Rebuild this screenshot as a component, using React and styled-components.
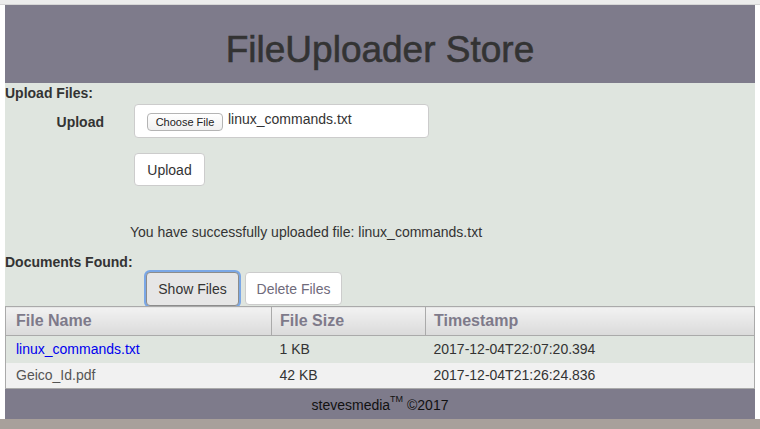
import styled, { createGlobalStyle } from 'styled-components'

const GlobalStyle = createGlobalStyle`
  html, body {
    margin: 0;
    padding: 0;
    background: #ffffff;
  }
  body {
    font-family: "Liberation Sans", Arial, Helvetica, sans-serif;
    font-size: 14px;
    color: #333;
  }
`;

const TopStrip = styled.div`
  height: 4px;
  background: #ececec;
  border-bottom: 1px solid #d6d6d6;
`;

const Page = styled.div`
  margin: 0 5px 0 5px;
  display: flex;
  flex-direction: column;
`;

const Header = styled.header`
  height: 78px;
  background: #7e7b8b;
  display: flex;
  justify-content: center;
  align-items: flex-start;
  box-sizing: border-box;
  padding-top: 25px;
`;

const Title = styled.h1`
  margin: 0;
  font-size: 37px;
  line-height: 40px;
  font-weight: 500;
  color: #333;
  -webkit-text-stroke: 0.6px #333;
`;

const Body = styled.main`
  background: #dfe5df;
  display: flex;
  flex-direction: column;
`;

const SectionTitle = styled.div`
  font-weight: bold;
  font-size: 14px;
  line-height: 20px;
  color: #333;
`;

const FormRow = styled.div`
  display: flex;
  align-items: center;
  gap: 30px;
  height: 34px;
  margin-top: 1px;
`;

const Label = styled.label`
  width: 99px;
  text-align: right;
  font-weight: bold;
  font-size: 14px;
  color: #333;
  padding-top: 1px;
`;

const FileBox = styled.div`
  width: 295px;
  height: 34px;
  box-sizing: border-box;
  background: #fff;
  border: 1px solid #ccc;
  border-radius: 4px;
  display: flex;
  align-items: center;
  padding: 0 12px;
  gap: 5px;
`;

const ChooseButton = styled.span`
  display: inline-flex;
  align-items: center;
  justify-content: center;
  width: 76px;
  height: 18px;
  box-sizing: border-box;
  margin-top: 2px;
  border: 1px solid #b4b4b4;
  border-radius: 4px;
  background: linear-gradient(#ffffff, #f0f0f0);
  font-family: "Liberation Sans", Arial, sans-serif;
  font-size: 11px;
  color: #222;
`;

const FileName = styled.span`
  font-size: 14px;
  color: #333;
  margin-top: -5px;
`;

const Button = styled.button`
  box-sizing: border-box;
  height: ${(p) => p.h || 33}px;
  width: ${(p) => p.w}px;
  font-family: "Liberation Sans", Arial, sans-serif;
  font-size: 14px;
  color: ${(p) => (p.muted ? '#6f6b7b' : '#333')};
  background: ${(p) => (p.active ? '#e6e6e6' : '#fff')};
  border: 1px solid ${(p) => (p.active ? '#8c8c8c' : '#ccc')};
  border-radius: 4px;
  box-shadow: ${(p) => (p.active ? '0 0 0 2px #7aa7e6' : 'none')};
  padding: 0;
  cursor: pointer;
`;

const UploadRow = styled.div`
  padding-left: 129px;
  margin-top: 15px;
`;

const Message = styled.div`
  margin-top: 36px;
  padding-left: 125px;
  font-size: 14px;
  line-height: 20px;
  color: #333;
`;

const DocsTitle = styled(SectionTitle)`
  margin-top: 10px;
`;

const ButtonBar = styled.div`
  display: flex;
  gap: 6px;
  padding-left: 141px;
  height: 34px;
  align-items: flex-start;
`;

const Table = styled.table`
  width: 100%;
  border-collapse: collapse;
  border-left: 1px solid #aaa;
  border-right: 1px solid #aaa;
  font-size: 14px;
`;

const Th = styled.th`
  text-align: left;
  font-size: 16px;
  font-weight: bold;
  color: #7e7a8a;
  height: 29px;
  box-sizing: border-box;
  padding: 0 8px 0 10px;
  background: linear-gradient(#f2f2f2, #dadada);
  border-top: 1px solid #aaa;
  border-bottom: 1px solid #aaa;
  border-left: 1px solid #aaa;
  &:first-child {
    border-left: none;
  }
  &:not(:first-child) {
    padding-left: 8px;
  }
`;

const Tr = styled.tr`
  background: ${(p) => (p.alt ? '#f1f1f1' : '#dfe5df')};
  height: ${(p) => (p.alt ? 26 : 27)}px;
  &:last-child td {
    border-bottom: 1px solid #aaa;
  }
`;

const Td = styled.td`
  padding: 0 8px 0 10px;
  color: ${(p) => (p.link ? '#0000ee' : p.dim ? '#555' : '#333')};
  &:not(:first-child) {
    padding-left: 8px;
  }
`;

const Footer = styled.footer`
  height: 30px;
  background: #7e7b8b;
  display: flex;
  align-items: center;
  justify-content: center;
  font-size: 14px;
  color: #111;
  padding-top: 2px;
  box-sizing: border-box;

  sup {
    font-size: 9px;
    vertical-align: top;
    position: relative;
    top: -3px;
  }
`;

const BottomBand = styled.div`
  height: 11px;
  background: #a8a09b;
`;

const files = [
  { name: 'linux_commands.txt', size: '1 KB', time: '2017-12-04T22:07:20.394', link: true },
  { name: 'Geico_Id.pdf', size: '42 KB', time: '2017-12-04T21:26:24.836' },
];

const App = () => {
  return (
    <>
      <GlobalStyle />
      <TopStrip />
      <Page>
        <Header>
          <Title>FileUploader Store</Title>
        </Header>
        <Body>
          <SectionTitle>Upload Files:</SectionTitle>
          <FormRow>
            <Label>Upload</Label>
            <FileBox>
              <ChooseButton>Choose File</ChooseButton>
              <FileName>linux_commands.txt</FileName>
            </FileBox>
          </FormRow>
          <UploadRow>
            <Button w={71}>Upload</Button>
          </UploadRow>
          <Message>You have successfully uploaded file: linux_commands.txt</Message>
          <DocsTitle>Documents Found:</DocsTitle>
          <ButtonBar>
            <Button w={93} h={34} active>Show Files</Button>
            <Button w={97} muted>Delete Files</Button>
          </ButtonBar>
          <Table>
            <colgroup>
              <col style={{ width: 266 }} />
              <col style={{ width: 154 }} />
              <col />
            </colgroup>
            <thead>
              <tr>
                <Th>File Name</Th>
                <Th>File Size</Th>
                <Th>Timestamp</Th>
              </tr>
            </thead>
            <tbody>
              {files.map((f, i) => (
                <Tr key={f.name} alt={i % 2 === 1}>
                  <Td link={f.link} dim={!f.link}>{f.name}</Td>
                  <Td>{f.size}</Td>
                  <Td>{f.time}</Td>
                </Tr>
              ))}
            </tbody>
          </Table>
        </Body>
        <Footer>
          <span>
            stevesmedia<sup>TM</sup> ©2017
          </span>
        </Footer>
      </Page>
      <BottomBand />
    </>
  )
}

export default App
